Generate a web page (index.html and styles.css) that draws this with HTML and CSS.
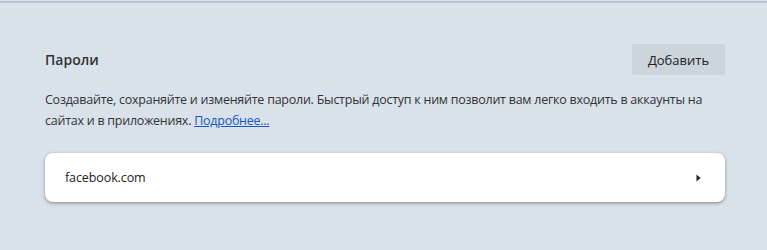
FILE: index.html
```html
<!DOCTYPE html>
<html lang="ru">
<head>
<meta charset="utf-8">
<link rel="stylesheet" href="styles.css">
</head>
<body>
<div class="page">
  <section class="passwords">
    <div class="header">
      <h2 class="title">Пароли</h2>
      <button class="add">Добавить</button>
    </div>
    <p class="desc"><span class="line">Создавайте, сохраняйте и изменяйте пароли. Быстрый доступ к ним позволит вам легко входить в аккаунты на</span><span class="line">сайтах и в приложениях. <a href="#" class="more">Подробнее...</a></span></p>
    <div class="card">
      <span class="site">facebook.com</span>
      <svg class="arrow" width="5" height="8" viewBox="0 0 5 8"><path d="M0.5 0.5 L4.5 4 L0.5 7.5 Z" fill="#222"/></svg>
    </div>
  </section>
</div>
</body>
</html>
```
FILE: styles.css
```css
html, body {
  margin: 0;
  padding: 0;
}
body {
  background: #d9e2ea;
  font-family: "Open Sans", "Noto Sans", sans-serif;
  color: #2b2b2b;
  width: 767px;
  height: 250px;
  overflow: hidden;
}
.page {
  border-top: 2px solid #b9c5d3;
  margin-top: 1px;
  padding: 41px 42px 0 45px;
}
.header {
  display: flex;
  justify-content: space-between;
  align-items: center;
  height: 31px;
}
.title {
  margin: 0;
  font-size: 14px;
  font-weight: 600;
  color: #333;
}
.add {
  width: 93px;
  height: 31px;
  border: none;
  border-radius: 2px;
  background: #ccd4dc;
  font-family: inherit;
  font-size: 13px;
  color: #222;
  padding: 0;
}
.desc {
  margin: 14px 0 0;
  font-size: 12.5px;
  letter-spacing: -0.25px;
  line-height: 21px;
  color: #333;
}
.line {
  display: block;
  white-space: nowrap;
}
.more {
  color: #1a56b8;
  text-decoration: underline;
}
.card {
  margin-top: 22px;
  height: 49px;
  background: #fff;
  border-radius: 8px;
  box-shadow: 0 1px 3px rgba(0,0,0,0.35), 0 2px 6px rgba(0,0,0,0.08);
  display: flex;
  align-items: center;
  justify-content: space-between;
  padding: 0 24px 0 20px;
}
.site {
  font-size: 12.5px;
  letter-spacing: -0.1px;
  color: #222;
}
.arrow {
  display: block;
}
```
